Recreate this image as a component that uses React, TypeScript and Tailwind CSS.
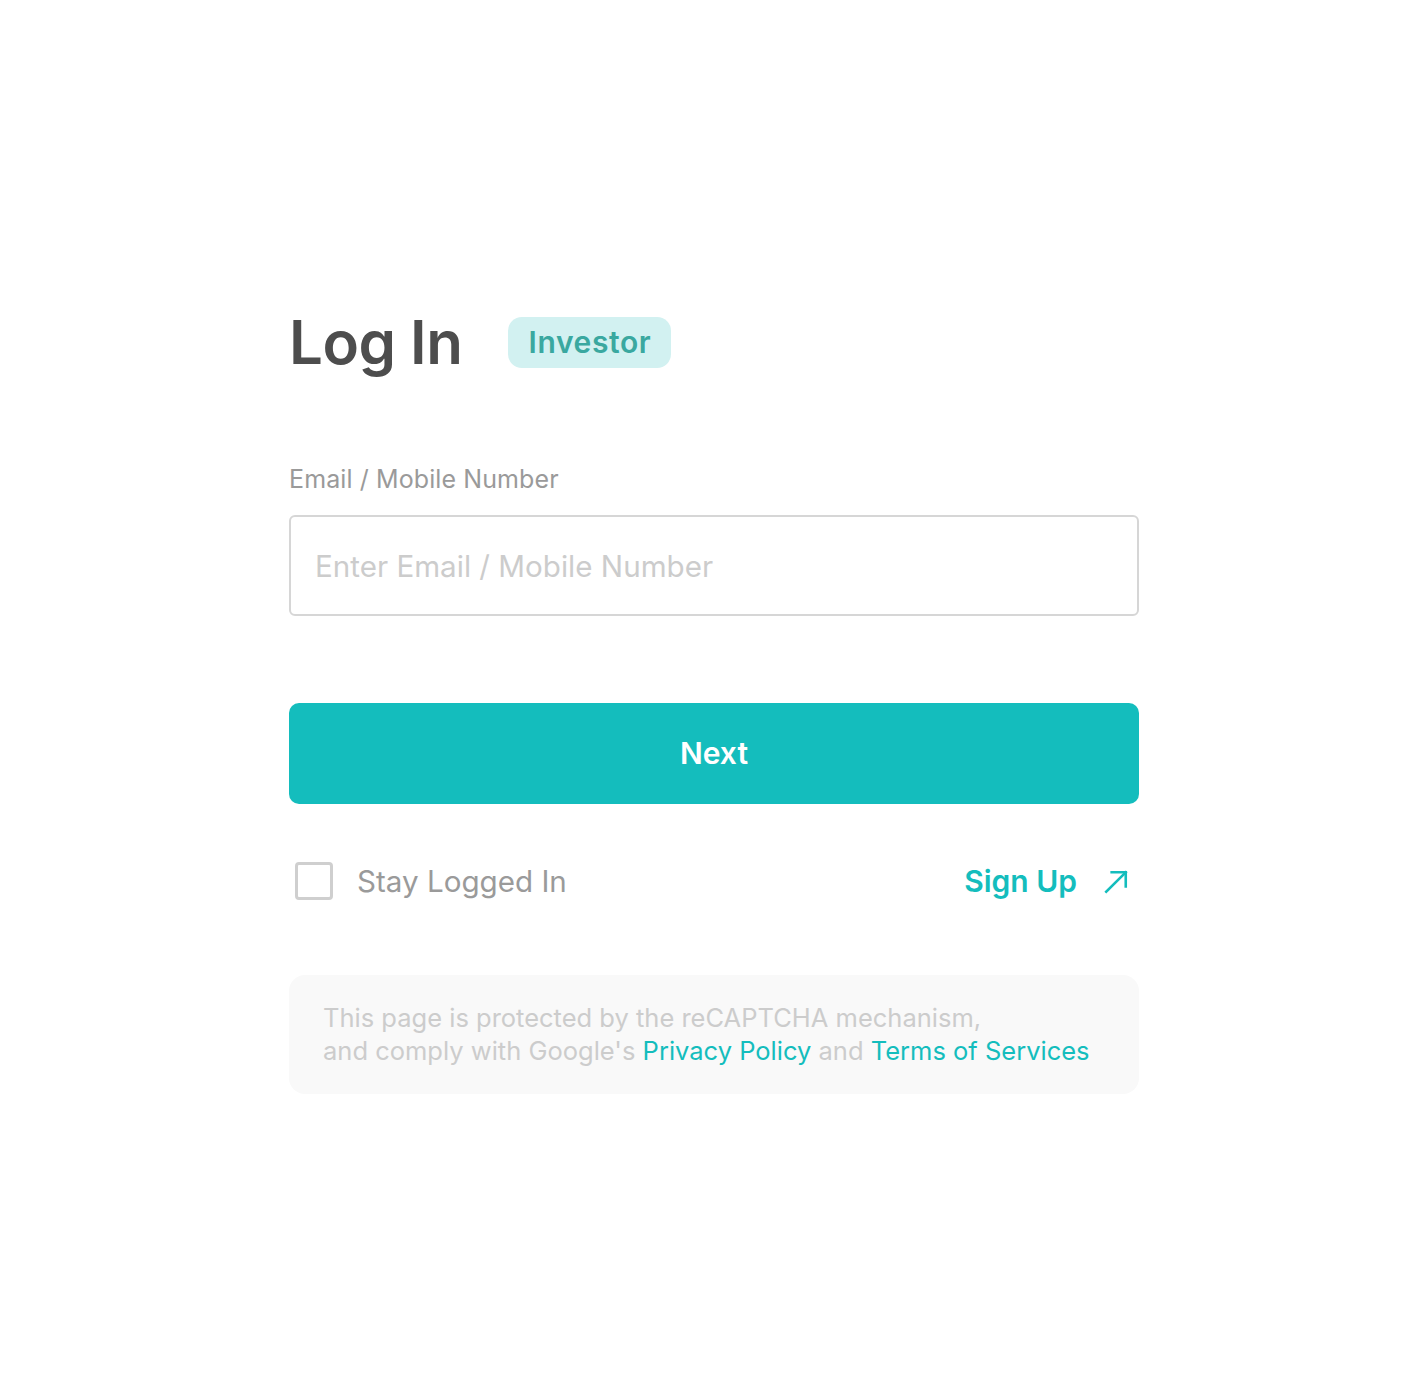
import { useState } from "react";

export default function App() {
  const [value, setValue] = useState("");
  const [stay, setStay] = useState(false);

  return (
    <div className="min-h-[1395px] w-full bg-white font-['Inter',sans-serif]">
      <div className="mx-auto w-[850px] pt-[312px]">
        {/* Header */}
        <div className="flex items-center gap-[46px]">
          <h1 className="text-[60px] font-semibold leading-none text-[#4d4d4d] tracking-[-0.5px]">Log In</h1>
          <span className="flex h-[51px] w-[163px] items-center justify-center rounded-[14px] bg-[#d2f1f1] text-[30px] font-semibold tracking-[0.6px] text-[#3aa8a0]">
            Investor
          </span>
        </div>

        {/* Email */}
        <label className="mt-[92px] block text-[25px] leading-[30px] tracking-[0.1px] text-[#9a9a9a]">Email / Mobile Number</label>
        <input
          value={value}
          onChange={(e) => setValue(e.target.value)}
          placeholder="Enter Email / Mobile Number"
          className="mt-[21px] h-[101px] w-full rounded-[6px] border-2 border-[#d6d6d6] px-[24px] text-[29.6px] text-[#4d4d4d] outline-none placeholder:text-[#cccccc]"
        />

        <button className="mt-[87px] h-[101px] w-full rounded-[10px] bg-[#14bdbd] text-[30px] font-semibold text-white">
          Next
        </button>

        {/* Options */}
        <div className="mt-[55px] flex items-center justify-between">
          <label className="flex cursor-pointer items-center gap-[24px] pl-[6px]">
            <span
              onClick={() => setStay((s) => !s)}
              className={`h-[38px] w-[38px] rounded-[4px] border-[3px] ${stay ? "border-[#14bdbd] bg-[#14bdbd]" : "border-[#cfcfcf] bg-white"}`}
            />
            <span className="text-[29.6px] text-[#9a9a9a]">Stay Logged In</span>
          </label>
          <a href="#" className="flex items-center gap-[26px] pr-[10px] text-[30px] font-semibold text-[#14bdbd]">
            Sign Up
            <svg width="26" height="26" viewBox="0 0 24 24" fill="none" stroke="currentColor" strokeWidth={2.4} strokeLinecap="square">
              <path d="M3 21L21 3" />
              <path d="M8 3h13v13" />
            </svg>
          </a>
        </div>

        {/* Notice */}
        <div className="mt-[71px] rounded-[16px] bg-[#f9f9f9] px-[34px] pt-[26px] pb-[27px] text-[25.5px] leading-[33px] text-[#cccccc]">
          This page is protected by the reCAPTCHA mechanism,
          <br />
          and comply with Google's <a href="#" className="text-[#14bdbd]">Privacy Policy</a> and{" "}
          <a href="#" className="text-[#14bdbd]">Terms of Services</a>
        </div>
      </div>
    </div>
  );
}
